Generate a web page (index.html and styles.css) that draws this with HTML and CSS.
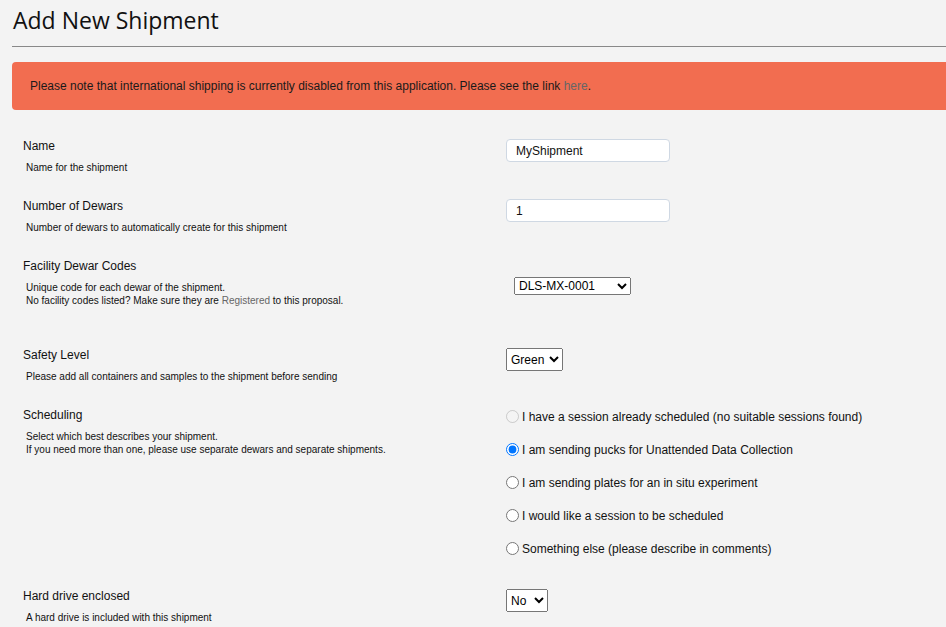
FILE: index.html
```html
<!DOCTYPE html>
<html lang="en">
<head>
    <meta charset="UTF-8">
    <meta name="viewport" content="width=device-width, initial-scale=1.0">
    <title>Add New Shipment</title>
    <link rel="stylesheet" href="styles.css">
</head>
<body>
    <div class="page">
        <h1>Add New Shipment</h1>
        <hr class="titleRule">

        <div class="message">
            Please note that international shipping is currently disabled from this application. Please see the link <a href="#">here</a>.
        </div>

        <form class="shipmentForm">
            <div class="formRow">
                <div class="rowLabel">
                    <label>Name</label>
                    <p class="hint">Name for the shipment</p>
                </div>
                <div class="rowField">
                    <input type="text" class="textInput" value="MyShipment">
                </div>
            </div>

            <div class="formRow">
                <div class="rowLabel">
                    <label>Number of Dewars</label>
                    <p class="hint">Number of dewars to automatically create for this shipment</p>
                </div>
                <div class="rowField">
                    <input type="text" class="textInput" value="1">
                </div>
            </div>

            <div class="formRow">
                <div class="rowLabel">
                    <label>Facility Dewar Codes</label>
                    <p class="hint">Unique code for each dewar of the shipment.<br>No facility codes listed? Make sure they are <a href="#">Registered</a> to this proposal.</p>
                </div>
                <div class="rowField dewarCodes">
                    <select class="codeSelect">
                        <option>DLS-MX-0001</option>
                        <option>DLS-MX-0002</option>
                    </select>
                </div>
            </div>

            <div class="formRow">
                <div class="rowLabel">
                    <label>Safety Level</label>
                    <p class="hint">Please add all containers and samples to the shipment before sending</p>
                </div>
                <div class="rowField">
                    <select class="smallSelect">
                        <option>Green</option>
                        <option>Yellow</option>
                        <option>Red</option>
                    </select>
                </div>
            </div>

            <div class="formRow">
                <div class="rowLabel">
                    <label>Scheduling</label>
                    <p class="hint">Select which best describes your shipment.<br>If you need more than one, please use separate dewars and separate shipments.</p>
                </div>
                <div class="rowField radioList">
                    <label class="radioItem"><input type="radio" name="sched" disabled> I have a session already scheduled (no suitable sessions found)</label>
                    <label class="radioItem"><input type="radio" name="sched" checked> I am sending pucks for Unattended Data Collection</label>
                    <label class="radioItem"><input type="radio" name="sched"> I am sending plates for an in situ experiment</label>
                    <label class="radioItem"><input type="radio" name="sched"> I would like a session to be scheduled</label>
                    <label class="radioItem"><input type="radio" name="sched"> Something else (please describe in comments)</label>
                </div>
            </div>

            <div class="formRow">
                <div class="rowLabel">
                    <label>Hard drive enclosed</label>
                    <p class="hint">A hard drive is included with this shipment</p>
                </div>
                <div class="rowField">
                    <select class="smallSelect">
                        <option>No</option>
                        <option>Yes</option>
                    </select>
                </div>
            </div>
        </form>
    </div>
</body>
</html>
```

FILE: styles.css
```css
* {
    margin: 0;
    padding: 0;
    box-sizing: border-box;
}
body {
    overflow: hidden;
    background: #f3f3f3;
    color: #111;
    font-family: "Liberation Sans", Arial, sans-serif;
}
.page {
    width: 1000px;
    padding-left: 12px;
}
h1 {
    font-family: "Open Sans", sans-serif;
    font-weight: 400;
    font-size: 23px;
    line-height: 30px;
    padding: 5px 0 0 1px;
    color: #111;
}
.titleRule {
    border: none;
    border-top: 1px solid #888;
    margin-top: 11px;
}
.message {
    margin-top: 15px;
    background: #f26d50;
    border-radius: 4px;
    padding: 17px 18px 16px;
    font-size: 12px;
    line-height: 15px;
    color: #1a1a1a;
}
.message a {
    color: #666;
    text-decoration: none;
}

/* form rows: label + hint on the left, control on the right */
.shipmentForm {
    padding: 29px 0 0 11px;
}
.formRow {
    display: grid;
    grid-template-columns: 483px auto;
    align-items: start;
    padding-bottom: 25px;
}
.rowLabel label {
    display: block;
    font-size: 12px;
    line-height: 14px;
}
.hint {
    margin-top: 8px;
    padding-left: 3px;
    font-size: 10px;
    line-height: 13px;
}
.hint a {
    color: #666;
    text-decoration: none;
}
.textInput {
    width: 164px;
    height: 23px;
    padding: 0 9px;
    border: 1px solid #cfd8e3;
    border-radius: 4px;
    background: #fff;
    font-family: "Liberation Sans", Arial, sans-serif;
    font-size: 12px;
    color: #111;
}
.dewarCodes {
    padding: 17px 0 28px 8px;
}
.codeSelect {
    width: 117px;
    height: 18px;
    font-family: "Liberation Sans", Arial, sans-serif;
    font-size: 12px;
}
.smallSelect {
    height: 23px;
    font-family: "Liberation Sans", Arial, sans-serif;
    font-size: 12px;
}
.radioList {
    display: flex;
    flex-direction: column;
    gap: 18px;
    padding: 1px 0 8px;
}
.radioItem {
    display: flex;
    align-items: center;
    height: 15px;
    font-size: 12px;
}
.radioItem input {
    margin: 0 3px 0 0;
}
```
